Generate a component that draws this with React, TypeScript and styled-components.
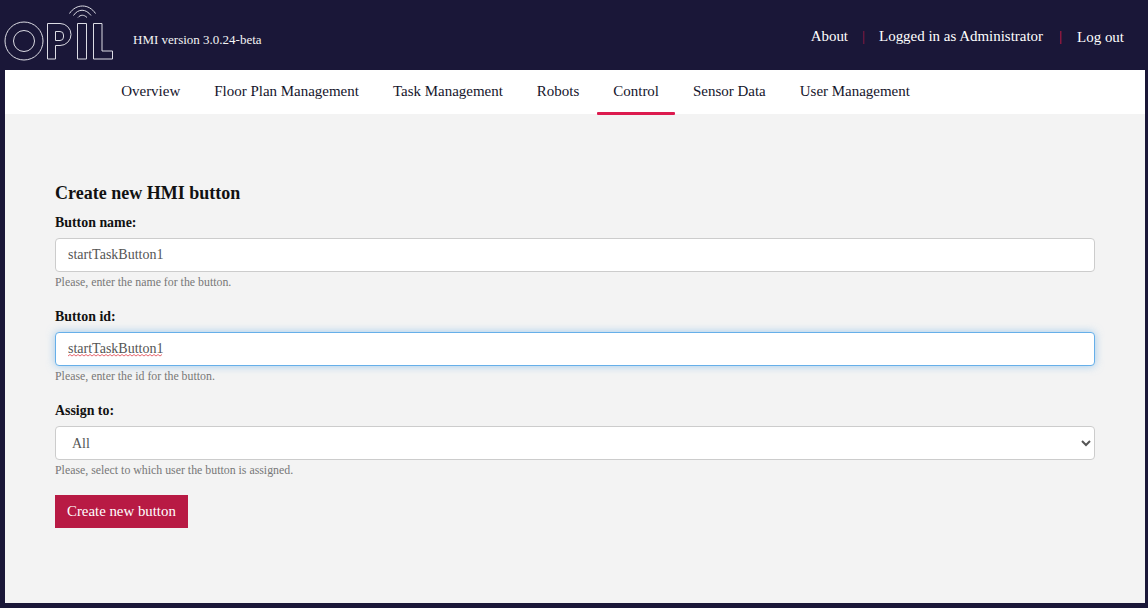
import React from 'react';
import styled, {createGlobalStyle} from 'styled-components';

const GlobalStyle = createGlobalStyle`
    html, body {
        margin: 0;
        padding: 0;
        background: #1a1738;
    }
    body {
        font-family: "Liberation Serif", "Times New Roman", serif;
    }
    * {
        box-sizing: border-box;
    }
`;

const Page = styled.div`
    display: flex;
    flex-direction: column;
    width: 1148px;
    height: 608px;
    overflow: hidden;
    background: #1a1738;
    padding: 0 3px 5px 5px;
`;

const Header = styled.header`
    flex: 0 0 70px;
    display: flex;
    align-items: flex-start;
    margin-left: -5px;
    margin-right: -3px;
`;

const Version = styled.span`
    margin: 32px 0 0 19px;
    color: #f4f4f4;
    font-size: 13px;
    line-height: 15px;
`;

const UserLinks = styled.div`
    display: flex;
    align-items: flex-start;
    margin-left: auto;
    padding: 27px 24px 0 0;
`;

const HeaderLink = styled.a<{$low?: boolean}>`
    color: #fff;
    font-size: 14.96px;
    line-height: 18px;
    margin-top: ${p => (p.$low ? '1px' : '0')};
`;

const Divider = styled.span<{$second?: boolean}>`
    margin: ${p => (p.$second ? '0 15px 0 16px' : '0 14px')};
    color: ${p => (p.$second ? '#dc1a48' : '#9c1a44')};
    font-size: 14.96px;
    line-height: 18px;
`;

const Nav = styled.nav`
    flex: 0 0 44px;
    display: flex;
    background: #fff;
    padding-left: 99.2px;
`;

const NavItem = styled.a<{$active?: boolean}>`
    position: relative;
    display: flex;
    align-items: center;
    height: 44px;
    padding: 0 17px 2px;
    color: #14142b;
    font-size: 14.98px;

    &::after {
        content: '';
        display: ${p => (p.$active ? 'block' : 'none')};
        position: absolute;
        left: 1px;
        right: 1px;
        bottom: -1px;
        height: 3px;
        border-radius: 1px;
        background: #dc1a4e;
    }
`;

const Main = styled.main`
    flex: 1;
    background: #f3f3f3;
    padding: 68px 50px 0;
`;

const Title = styled.h2`
    margin: 0 0 10px;
    color: #111;
    font-size: 18px;
    line-height: 22px;
    font-weight: 700;
`;

const Field = styled.div`
    margin-bottom: 19px;
`;

const Label = styled.label`
    display: block;
    margin-bottom: 7px;
    color: #111;
    font-size: 13.9px;
    line-height: 17px;
    font-weight: 700;
`;

const InputWrap = styled.div`
    position: relative;
`;

const TextInput = styled.input<{$focused?: boolean}>`
    display: block;
    width: 100%;
    height: 34px;
    padding: 0 12px;
    border-radius: 4px;
    outline: none;
    background: #fff;
    color: #555;
    font-family: inherit;
    font-size: 14px;
    border: 1px solid ${p => (p.$focused ? '#66afe9' : '#ccc')};
    box-shadow: ${p => (p.$focused ? '0 0 8px rgba(102, 175, 233, 0.6)' : 'none')};
`;

const Squiggle = styled.svg`
    position: absolute;
    left: 13px;
    top: 22px;
`;

const Select = styled.select`
    display: block;
    width: 100%;
    height: 34px;
    padding: 0 12px;
    border: 1px solid #ccc;
    border-radius: 4px;
    background: #fff;
    color: #555;
    font-family: inherit;
    font-size: 14px;
    outline: none;
`;

const Help = styled.small`
    display: block;
    margin-top: 3px;
    color: #777;
    font-size: 11.85px;
    line-height: 14px;
`;

const SubmitButton = styled.button`
    display: block;
    height: 33px;
    margin-top: -1px;
    padding: 0 12px;
    border: none;
    background: #b81a44;
    color: #fff;
    font-family: inherit;
    font-size: 14.85px;
`;

function Logo() {
    return (
        <svg width="114" height="62" viewBox="0 0 114 62" fill="none" stroke="#dcdce4" strokeWidth="1" style={{flex: 'none'}}>
            <circle cx="24" cy="41" r="19" />
            <circle cx="24" cy="41" r="10.5" />
            <path d="M47.5 23.5H60a11 11 0 0 1 0 22h-4.5v13.5h-8z" />
            <path d="M55.5 31.5H60a3.5 3.5 0 0 1 3.5 3.5v2a3.5 3.5 0 0 1-3.5 3.5h-4.5z" />
            <path d="M77.5 23.5h9v35.5h-9z" />
            <path d="M93.5 23.5h8.500v27.500h10.500v8h-19z" />
            <path d="M69.500 13.500C76 3.500 89 3.500 95.500 13.500" />
            <path d="M73.500 15.500C78 8.500 86 8.500 91 15.500" />
            <path d="M78 17.500C80.500 14.500 84 14.500 87 17.500" />
        </svg>
    );
}

// red spell-check wave under the focused input's text
function SpellWave() {
    const points = Array.from({length: 48}, (_, i) => `${i * 2},${i % 2 ? 0.5 : 2}`).join(' ');
    return (
        <Squiggle width="95" height="3" viewBox="0 0 95 3" fill="none" stroke="#e0404a" strokeWidth="0.8">
            <polyline points={points} />
        </Squiggle>
    );
}

export default function App() {
    return (
        <>
            <GlobalStyle />
            <Page>
                <Header>
                    <Logo />
                    <Version>HMI version 3.0.24-beta</Version>
                    <UserLinks>
                        <HeaderLink>About</HeaderLink>
                        <Divider>|</Divider>
                        <HeaderLink>Logged in as Administrator</HeaderLink>
                        <Divider $second>|</Divider>
                        <HeaderLink $low>Log out</HeaderLink>
                    </UserLinks>
                </Header>
                <Nav>
                    <NavItem>Overview</NavItem>
                    <NavItem>Floor Plan Management</NavItem>
                    <NavItem>Task Management</NavItem>
                    <NavItem>Robots</NavItem>
                    <NavItem $active>Control</NavItem>
                    <NavItem>Sensor Data</NavItem>
                    <NavItem>User Management</NavItem>
                </Nav>
                <Main>
                    <Title>Create new HMI button</Title>
                    <Field>
                        <Label>Button name:</Label>
                        <TextInput readOnly spellCheck={false} value="startTaskButton1" />
                        <Help>Please, enter the name for the button.</Help>
                    </Field>
                    <Field>
                        <Label>Button id:</Label>
                        <InputWrap>
                            <TextInput $focused readOnly spellCheck={false} value="startTaskButton1" />
                            <SpellWave />
                        </InputWrap>
                        <Help>Please, enter the id for the button.</Help>
                    </Field>
                    <Field>
                        <Label>Assign to:</Label>
                        <Select defaultValue="All">
                            <option>All</option>
                        </Select>
                        <Help>Please, select to which user the button is assigned.</Help>
                    </Field>
                    <SubmitButton>Create new button</SubmitButton>
                </Main>
            </Page>
        </>
    );
}
